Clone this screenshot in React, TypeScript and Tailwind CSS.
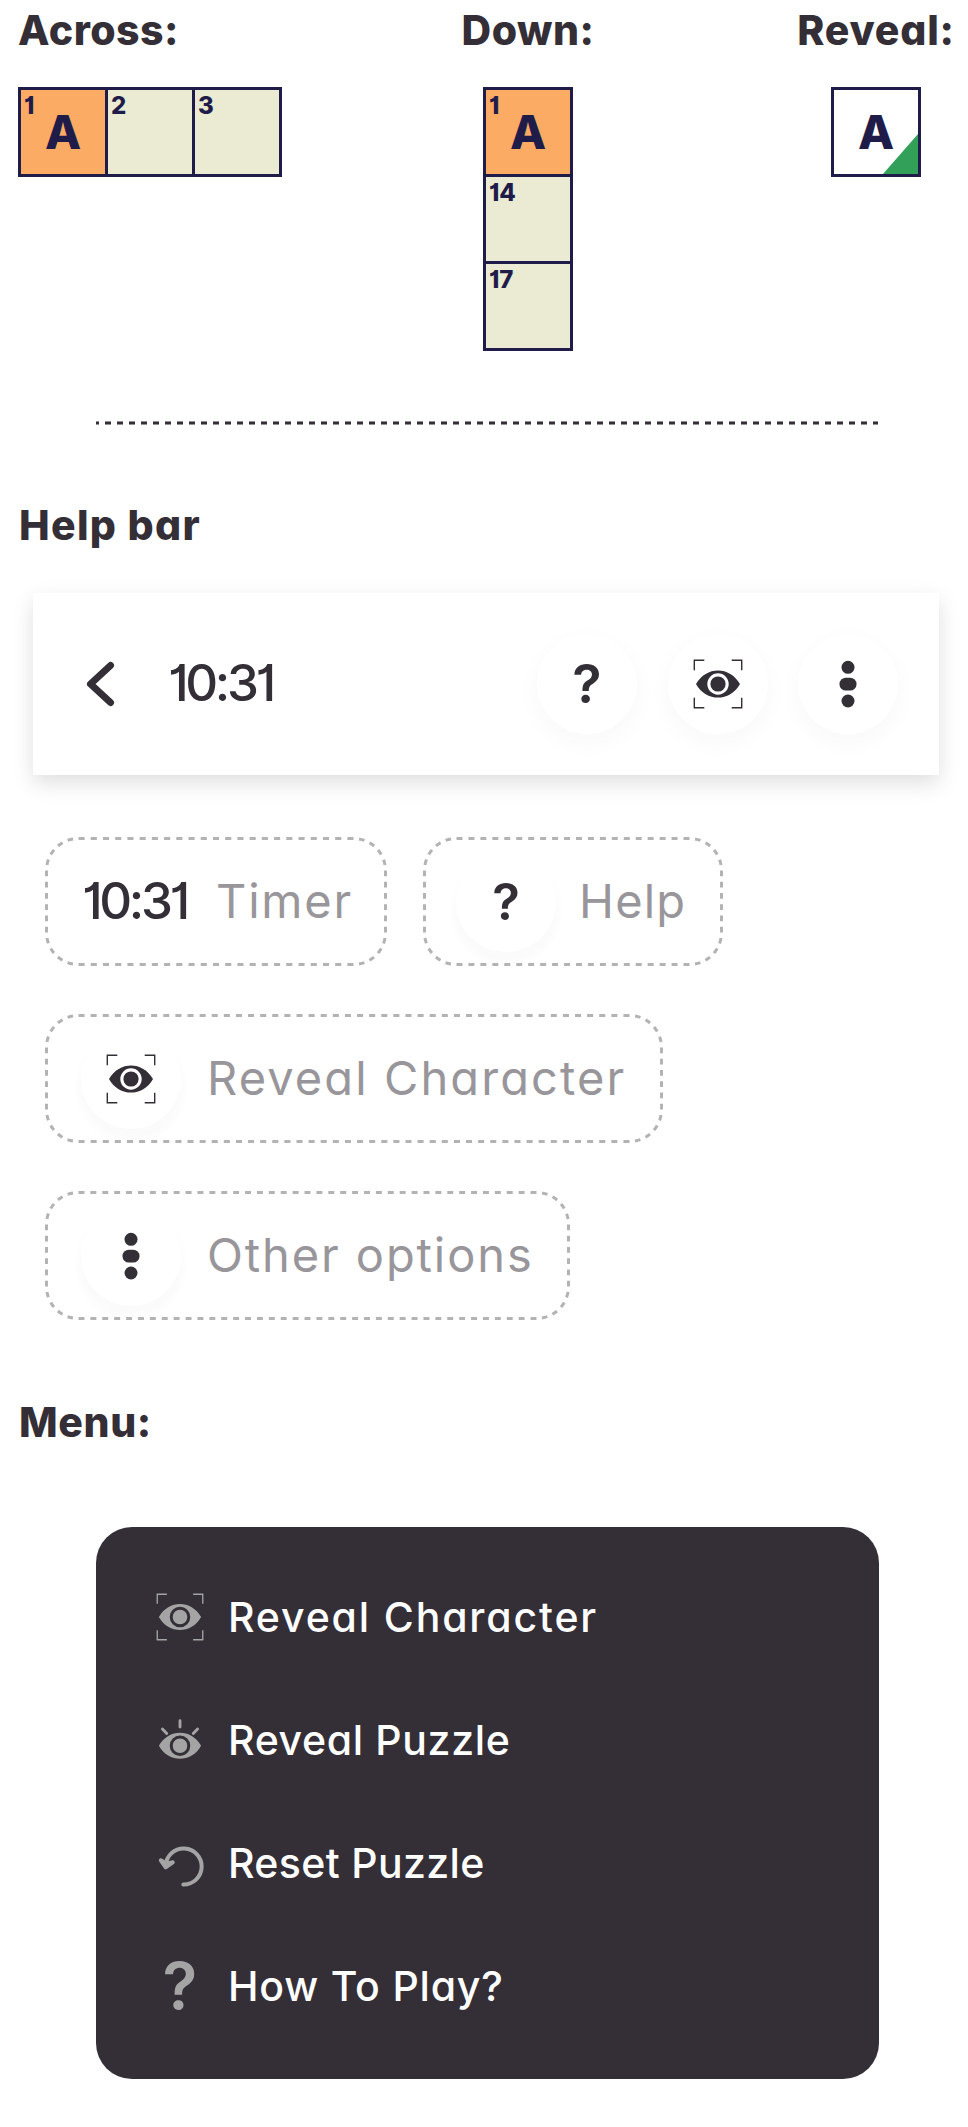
import type { ReactNode } from "react";

const heading =
  "text-[41px] leading-[48px] font-extrabold whitespace-nowrap text-[#342e37]";

function Cell({ number, letter, fill, corner }: { number?: string; letter?: string; fill: string; corner?: boolean }) {
  return (
    <div className={`relative flex size-[84px] items-center justify-center ${fill}`}>
      {number && (
        <span className="absolute top-[4px] left-[3px] text-[24px] leading-[24px] font-extrabold">{number}</span>
      )}
      {letter && <span className="text-[47px] leading-[48px] font-extrabold">{letter}</span>}
      {corner && (
        <svg className="absolute right-0 bottom-0" width="35" height="40" viewBox="0 0 35 40">
          <path d="M35 0V40H0Z" fill="#32a058" />
        </svg>
      )}
    </div>
  );
}

function EyeShape({ cy }: { cy: number }) {
  return (
    <path
      fillRule="evenodd"
      d={`M3 ${cy}C8 ${cy - 9} 16.500 ${cy - 13.6} 25 ${cy - 13.6}S42 ${cy - 9} 47 ${cy}C42 ${cy + 9} 33.500 ${cy + 13.6} 25 ${cy + 13.6}S8 ${cy + 9} 3 ${cy}ZM25 ${cy - 10.7}A10.700 10.700 0 1 0 25 ${cy + 10.7}A10.700 10.700 0 1 0 25 ${cy - 10.7}ZM25 ${cy - 7.6}A7.600 7.600 0 1 1 25 ${cy + 7.6}A7.600 7.600 0 1 1 25 ${cy - 7.6}Z`}
      fill="currentColor"
    />
  );
}

function EyeFrame({ size = 50 }: { size?: number }) {
  return (
    <svg width={size} height={size} viewBox="0 0 50 50" className="shrink-0">
      <path
        d="M1.300 11.300V1.300H11.300M38.700 1.300H48.700V11.300M48.700 38.700V48.700H38.700M11.300 48.700H1.300V38.700"
        fill="none"
        stroke="currentColor"
        strokeWidth="1.400"
      />
      <EyeShape cy={25} />
    </svg>
  );
}

function EyeRays() {
  return (
    <svg width="48" height="48" viewBox="0 0 50 50" className="shrink-0">
      <path d="M25 5V11.500M6.700 13.500L11.200 18.200M43.300 13.500L38.800 18.200" fill="none" stroke="currentColor" strokeWidth="3" strokeLinecap="round" />
      <EyeShape cy={31} />
    </svg>
  );
}

function Reset() {
  return (
    <svg width="48" height="48" viewBox="0 0 48 48" className="shrink-0" fill="none" stroke="currentColor" strokeWidth="4" strokeLinecap="round" strokeLinejoin="round">
      <path d="M27.300 45.500A18 18 0 1 0 9.700 26.300" />
      <path d="M4.800 21.300L9.700 28.300L16.800 23.300L10.500 24.800Z" />
    </svg>
  );
}

function Dots() {
  return (
    <svg width="18" height="48" viewBox="0 0 18 48" fill="currentColor">
      <circle cx="9" cy="7.300" r="6.500" />
      <rect x="0.500" y="17.700" width="17" height="12.800" rx="6.300" />
      <circle cx="9" cy="41" r="6.500" />
    </svg>
  );
}

function Round({ children, bar }: { children: ReactNode; bar?: boolean }) {
  return (
    <div
      className={`flex size-[100px] shrink-0 items-center justify-center rounded-full bg-white ${
        bar ? "shadow-[0_8px_18px_6px_rgba(0,0,0,0.018)]" : "shadow-[0_9px_9px_3px_rgba(0,0,0,0.02)]"
      }`}
    >
      {children}
    </div>
  );
}

const R = 32;

function Dashes({ w, h }: { w: number; h: number }) {
  const l = 1.5;
  const r = w - 1.5;
  const t = 1.5;
  const b = h - 1.5;
  const unit = (len: number) => len / (2 * Math.round((len / 6 + 1) / 2) - 1);
  const ux = unit(r - l - 2 * R);
  const uy = unit(b - t - 2 * R);
  const ua = (Math.PI * R) / 2 / 9;
  return (
    <svg className="pointer-events-none absolute inset-0" width={w} height={h} fill="none" stroke="#b3b3b3" strokeWidth="3">
      <path d={`M${l + R} ${t}H${r - R}M${l + R} ${b}H${r - R}`} strokeDasharray={ux} />
      <path d={`M${l} ${t + R}V${b - R}M${r} ${t + R}V${b - R}`} strokeDasharray={uy} />
      <path
        d={`M${l} ${t + R}A${R} ${R} 0 0 1 ${l + R} ${t}M${r - R} ${t}A${R} ${R} 0 0 1 ${r} ${t + R}M${r} ${b - R}A${R} ${R} 0 0 1 ${r - R} ${b}M${l + R} ${b}A${R} ${R} 0 0 1 ${l} ${b - R}`}
        strokeDasharray={ua}
        strokeDashoffset={ua}
      />
    </svg>
  );
}

function Pill({ w, className, children }: { w: number; className: string; children: ReactNode }) {
  return (
    <div className={`relative flex h-[129px] items-center whitespace-nowrap ${className}`}>
      <Dashes w={w} h={129} />
      {children}
    </div>
  );
}

const label = "pb-[2px] text-[47px] leading-[56px] font-normal text-[#99969b]";
const time = "pb-[2px] text-[51px] leading-[56px] font-medium";

function MenuRow({ icon, className, children }: { icon: ReactNode; className: string; children: ReactNode }) {
  return (
    <li className="flex h-[123px] items-center">
      <span className="flex w-[48px] justify-center text-[#a4a4a4]">{icon}</span>
      <span className={`ml-[24px] text-[41px] leading-[48px] font-medium whitespace-nowrap text-white ${className}`}>{children}</span>
    </li>
  );
}

export default function App() {
  return (
    <main className="h-[2127px] w-[968px] overflow-hidden bg-white font-['Inter','Open_Sans',sans-serif] text-[#342e37] [font-feature-settings:'cv11','cv01']">
      <section className="flex h-[421px] pt-[6px]">
        <div className="ml-[18px] w-[440px]">
          <h2 className={`${heading} tracking-[0.5px]`}>Across:</h2>
          <div className="mt-[33px] flex w-[264px] gap-[3px] border-[3px] border-[#1f1c4a] bg-[#1f1c4a] text-[#1f1c4a]">
            <Cell number="1" letter="A" fill="bg-[#fcab64]" />
            <Cell number="2" fill="bg-[#ebebd3]" />
            <Cell number="3" fill="bg-[#ebebd3]" />
          </div>
        </div>
        <div className="flex w-[140px] flex-col items-center">
          <h2 className={`${heading} tracking-[0.5px]`}>Down:</h2>
          <div className="mt-[33px] flex w-[90px] flex-col gap-[3px] border-[3px] border-[#1f1c4a] bg-[#1f1c4a] text-[#1f1c4a]">
            <Cell number="1" letter="A" fill="bg-[#fcab64]" />
            <Cell number="14" fill="bg-[#ebebd3]" />
            <Cell number="17" fill="bg-[#ebebd3]" />
          </div>
        </div>
        <div className="ml-[198px] flex w-[160px] flex-col items-center">
          <h2 className={`${heading} tracking-[0.8px]`}>Reveal:</h2>
          <div className="mt-[33px] w-[90px] border-[3px] border-[#1f1c4a] text-[#1f1c4a]">
            <Cell letter="A" fill="bg-white" corner />
          </div>
        </div>
      </section>

      <div className="ml-[96px] h-[4px] w-[782px] bg-[repeating-linear-gradient(90deg,#342e37_0px_3px,transparent_3px_9px,#342e37_9px_12px)] [mask-image:linear-gradient(#0008_1px,#000_1px_3px,#0008_3px)]" />

      <h2 className={`mt-[76px] ml-[19px] ${heading} tracking-[1.3px]`}>Help bar</h2>

      <section className="mt-[44px] ml-[33px] flex h-[182px] w-[906px] items-center bg-white pr-[41px] pl-[52px] shadow-[0_8px_20px_rgba(0,0,0,0.13)]">
        <svg width="32" height="48" viewBox="0 0 32 48" fill="none">
          <path d="M25.500 5.500L5.500 24L25.500 42.500" stroke="#342e37" strokeWidth="7" strokeLinecap="round" strokeLinejoin="round" />
        </svg>
        <span className={`ml-[51px] ${time} tracking-[-3.4px]`}>10:31</span>
        <div className="ml-auto flex gap-[30.5px]">
          <Round bar>
            <span className="text-[54px] leading-[56px] font-semibold">?</span>
          </Round>
          <Round bar>
            <EyeFrame />
          </Round>
          <Round bar>
            <Dots />
          </Round>
        </div>
      </section>

      <section className="mt-[62px] ml-[45px] flex flex-col gap-[48px]">
        <div className="flex gap-[36px]">
          <Pill w={342} className="w-[342px] pl-[37px]">
            <span className={`w-[110px] ${time} tracking-[-3.4px]`}>10:31</span>
            <span className={`ml-[24px] ${label} tracking-[1.8px]`}>Timer</span>
          </Pill>
          <Pill w={300} className="w-[300px] pl-[33px]">
            <Round>
              <span className="text-[51px] leading-[56px] font-semibold">?</span>
            </Round>
            <span className={`ml-[23px] ${label} tracking-[1.2px]`}>Help</span>
          </Pill>
        </div>
        <Pill w={618} className="w-[618px] pl-[36px]">
          <Round>
            <EyeFrame />
          </Round>
          <span className={`ml-[26px] ${label} tracking-[2.1px]`}>Reveal Character</span>
        </Pill>
        <Pill w={525} className="w-[525px] pl-[36px]">
          <Round>
            <Dots />
          </Round>
          <span className={`ml-[26px] ${label} tracking-[1.9px]`}>Other options</span>
        </Pill>
      </section>

      <h2 className={`mt-[78px] ml-[19px] ${heading} tracking-[0.6px]`}>Menu:</h2>

      <ul className="mt-[81px] ml-[96px] h-[552px] w-[783px] rounded-[36px] bg-[#342e37] pt-[28px] pl-[60px]">
        <MenuRow icon={<EyeFrame size={48} />} className="tracking-[1.85px]">Reveal Character</MenuRow>
        <MenuRow icon={<EyeRays />} className="tracking-[0.65px]">Reveal Puzzle</MenuRow>
        <MenuRow icon={<Reset />} className="tracking-[0.35px]">Reset Puzzle</MenuRow>
        <MenuRow icon={<span className="text-[64px] leading-[64px] font-semibold">?</span>} className="tracking-[0.8px]">How To Play?</MenuRow>
      </ul>
    </main>
  );
}
